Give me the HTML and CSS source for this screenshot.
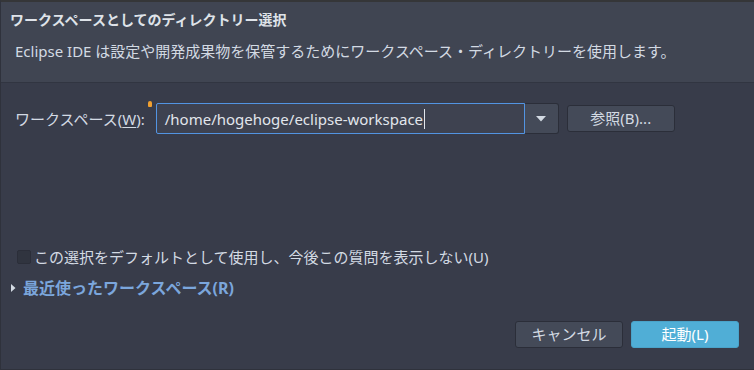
FILE: index.html
```html
<!DOCTYPE html>
<html lang="ja">
<head>
<meta charset="utf-8">
<link rel="stylesheet" href="styles.css">
</head>
<body>
<div class="dialog">
  <header class="head">
    <div class="title">ワークスペースとしてのディレクトリー選択</div>
    <div class="desc">Eclipse IDE は設定や開発成果物を保管するためにワークスペース・ディレクトリーを使用します。</div>
  </header>
  <main class="content">
    <div class="row">
      <label class="label">ワークスペース(<u>W</u>):</label>
      <span class="bulb"></span>
      <div class="combo">
        <div class="input"><span>/home/hogehoge/eclipse-workspace</span><span class="caret"></span></div>
        <div class="drop"><svg width="10" height="6" viewBox="0 0 10 6"><path d="M0 0h10L5 5.5z" fill="#d3dae3"/></svg></div>
      </div>
      <button class="btn browse">参照(B)...</button>
    </div>
    <div class="check-row">
      <span class="box"></span>
      <span>この選択をデフォルトとして使用し、今後この質問を表示しない(U)</span>
    </div>
    <div class="recent">
      <svg class="tri" width="5" height="8" viewBox="0 0 5 8"><path d="M0 0l4.5 4L0 8z" fill="#d3dae3"/></svg>
      <span>最近使ったワークスペース(R)</span>
    </div>
    <div class="actions">
      <button class="btn cancel">キャンセル</button>
      <button class="btn primary">起動(L)</button>
    </div>
  </main>
</div>
</body>
</html>
```
FILE: styles.css
```css
html, body {
  margin: 0;
  padding: 0;
  background: #383c4a;
}
body {
  width: 754px;
  height: 370px;
  overflow: hidden;
  font-family: "Noto Sans", "Noto Sans CJK JP", sans-serif;
  font-size: 15px;
  color: #d3dae3;
}
.dialog {
  box-sizing: border-box;
  width: 754px;
  height: 370px;
  border-top: 2px solid #353638;
  border-left: 1px solid #2f323c;
  border-bottom: 1px solid #2f323c;
  display: flex;
  flex-direction: column;
}
.head {
  background: #404552;
  height: 81px;
  box-sizing: border-box;
  padding: 8px 0 0 9px;
  border-bottom: 1px solid #313541;
}
.title {
  font-size: 14px;
  font-weight: bold;
  line-height: 20px;
  color: #dfe3e9;
}
.desc {
  margin-top: 11px;
  padding-left: 5px;
  line-height: 20px;
}
.content {
  flex: 1;
  display: flex;
  flex-direction: column;
}
.row {
  margin-top: 20px;
  display: flex;
  align-items: center;
  height: 31px;
  padding-left: 14px;
}
.label {
  line-height: 20px;
}
.label u {
  text-decoration-thickness: 1px;
  text-underline-offset: 2px;
}
.bulb {
  align-self: flex-start;
  margin: -2px 0 0 3px;
  width: 4px;
  height: 6px;
  background: #f0a030;
  border-radius: 2px 2px 1px 1px;
}
.combo {
  margin-left: 4px;
  display: flex;
  height: 31px;
}
.input {
  box-sizing: border-box;
  width: 369px;
  height: 31px;
  border: 1px solid #5294e2;
  border-radius: 2px 0 0 2px;
  background: #3e4250;
  padding-left: 8px;
  display: flex;
  align-items: center;
  color: #e2e6ec;
}
.caret {
  width: 1px;
  height: 20px;
  background: #e2e6ec;
  margin-left: 1px;
}
.drop {
  box-sizing: border-box;
  width: 34px;
  height: 31px;
  background: #444a58;
  border: 1px solid #2b2e39;
  border-left: none;
  border-radius: 0 3px 3px 0;
  display: flex;
  align-items: center;
  justify-content: center;
}
.btn {
  font-family: inherit;
  font-size: 15px;
  box-sizing: border-box;
  height: 27px;
  border-radius: 3px;
  border: 1px solid #2b2e39;
  background: #444a58;
  color: #d3dae3;
  padding: 0;
  line-height: 1;
}
.browse {
  margin-left: 8px;
  width: 108px;
}
.check-row {
  margin-top: 113px;
  display: flex;
  align-items: center;
  line-height: 20px;
  padding-left: 16px;
}
.box {
  box-sizing: border-box;
  width: 14px;
  height: 14px;
  border: 1px solid #2b2e39;
  background: #30343f;
  border-radius: 2px;
  margin-right: 3px;
}
.recent {
  margin-top: 11px;
  display: flex;
  align-items: center;
  line-height: 20px;
  padding-left: 10px;
  font-size: 16px;
  font-weight: bold;
  color: #7ba6dc;
}
.tri {
  margin-right: 7px;
}
.actions {
  margin-top: 23px;
  display: flex;
  justify-content: flex-end;
  gap: 8px;
  padding-right: 15px;
}
.cancel {
  width: 108px;
}
.primary {
  width: 108px;
  background: #50aed6;
  border-color: #4aa3c9;
  color: #ffffff;
}
```
